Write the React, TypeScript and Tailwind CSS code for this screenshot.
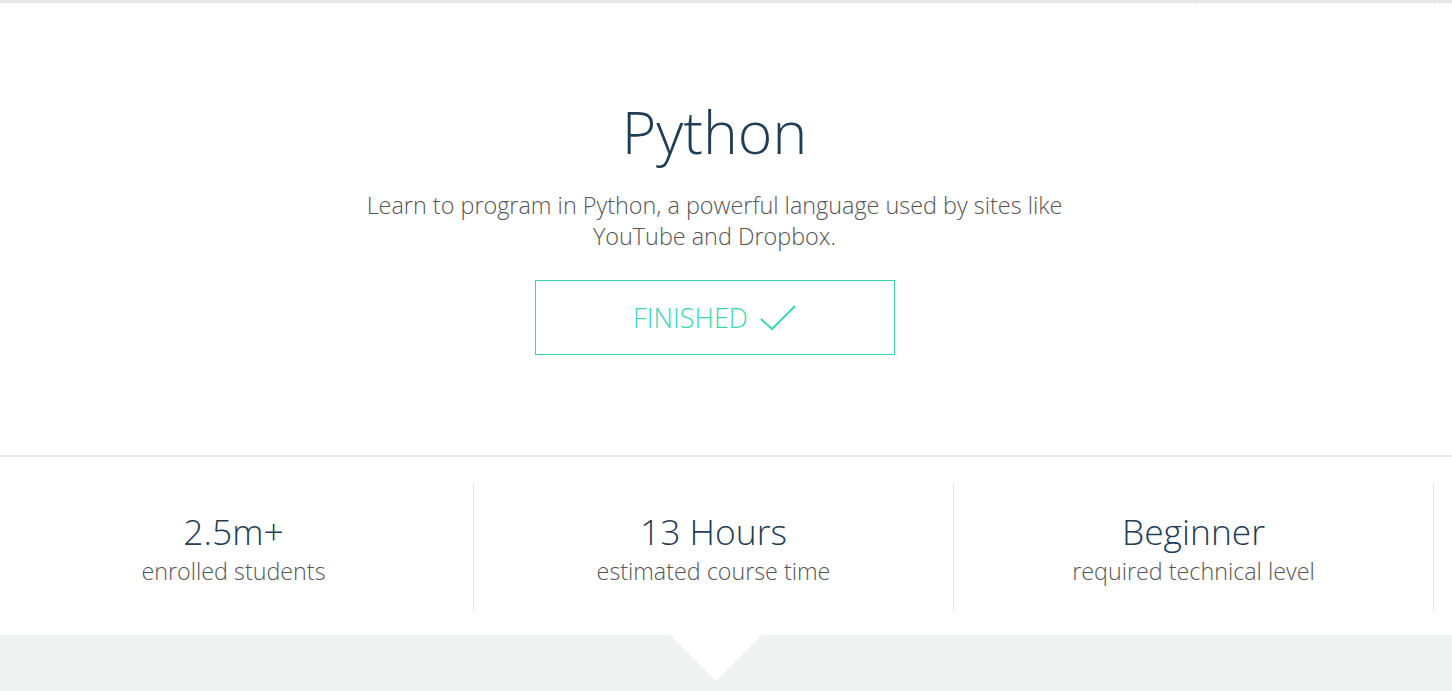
import React from "react";

const stats = [
  { value: "2.5m+", label: "enrolled students" },
  { value: "13 Hours", label: "estimated course time" },
  { value: "Beginner", label: "required technical level" },
];

export default function App() {
  return (
    <div className="w-[1452px] h-[691px] overflow-hidden bg-white font-['Open_Sans',sans-serif] font-light">
      {/* top strip */}
      <div className="relative h-[3px] bg-[#e8e8e8]">
        <span className="absolute left-[1195px] top-0 h-[4px] w-px bg-[#dcdcdc]" />
        <span className="absolute left-[1434px] top-0 h-[4px] w-px bg-[#dcdcdc]" />
      </div>

      {/* hero */}
      <div className="h-[454px] border-b-2 border-[#e8e8e8]">
        <div className="flex w-[1429px] flex-col items-center pt-[92px]">
          <h1 className="text-[59px] leading-[72px] text-[#1f3d54]">Python</h1>
          <p className="mt-[23px] w-[740px] text-center text-[23.4px] leading-[31px] text-[#555]">
            Learn to program in Python, a powerful language used by sites like YouTube and Dropbox.
          </p>
          <div className="mt-[28px] flex h-[75px] w-[360px] items-center justify-center gap-[12px] border-[1.5px] border-[#34d4b3] text-[27px] text-[#3dd6b5]">
            <span className="pt-[2px]">FINISHED</span>
            <svg width="36" height="26" viewBox="0 0 36 26" fill="none">
              <path d="M1 14 L12 24 L35 1" stroke="#3dd6b5" strokeWidth="2" />
            </svg>
          </div>
        </div>
      </div>

      {/* stats */}
      <div className="ml-[-6px] flex pt-[26px] pb-[24px]">
        {stats.map((s) => (
          <div
            key={s.value}
            className="flex h-[128px] w-[480px] shrink-0 flex-col items-center justify-center gap-[3px] border-r border-[#e4e4e4]"
          >
            <div className="text-[35.4px] leading-[44px] text-[#1f3d54]">{s.value}</div>
            <div className="text-[23.3px] leading-[30px] text-[#555]">{s.label}</div>
          </div>
        ))}
      </div>

      {/* gray band with pointer */}
      <div className="h-[56px] bg-[#f0f1f1]">
        <div className="flex w-[1432px] justify-center">
          <div className="h-0 w-0 border-x-[46px] border-t-[46px] border-x-transparent border-t-white" />
        </div>
      </div>
    </div>
  );
}
